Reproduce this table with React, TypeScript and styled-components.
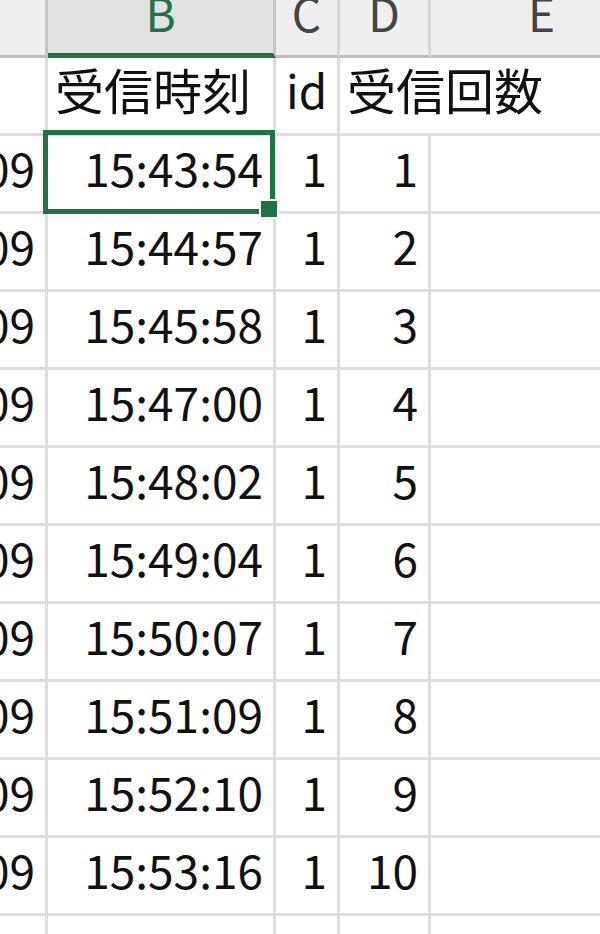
import React from "react";
import styled, { createGlobalStyle } from "styled-components";

const GlobalStyle = createGlobalStyle`
  html, body {
    margin: 0;
    padding: 0;
    background: #ffffff;
  }
  body {
    font-family: "Noto Sans CJK JP", "Noto Sans", sans-serif;
  }
`;

const GREEN = "#217346";

type Col = { key: string; width: number };

const columns: Col[] = [
  { key: "A", width: 48 },
  { key: "B", width: 228 },
  { key: "C", width: 64 },
  { key: "D", width: 91 },
  { key: "E", width: 224 },
];

const times = [
  "15:43:54",
  "15:44:57",
  "15:45:58",
  "15:47:00",
  "15:48:02",
  "15:49:04",
  "15:50:07",
  "15:51:09",
  "15:52:10",
  "15:53:16",
];

const App = () => {
  return (
    <>
      <GlobalStyle />
      <Sheet>
        <HeaderRow>
          {columns.map((c) => (
            <ColHeader
              key={c.key}
              $width={c.width}
              $selected={c.key === "B"}
              $dark={c.key === "A" || c.key === "B"}
            >
              {c.key === "A" ? "" : c.key}
            </ColHeader>
          ))}
        </HeaderRow>

        <Row>
          <Cell $width={48} />
          <Cell $width={228} $align="left" $cjk>受信時刻</Cell>
          <Cell $width={64} $align="left">id</Cell>
          <Cell $width={91} $align="left" $cjk $spill>受信回数</Cell>
          <Cell $width={224} />
        </Row>

        {times.map((t, i) => (
          <Row key={t}>
            <Cell $width={48}>2021/12/09</Cell>
            <Cell $width={228} $active={i === 0}>
              {t}
              {i === 0 && (
                <Selection>
                  <FillHandle />
                </Selection>
              )}
            </Cell>
            <Cell $width={64}>1</Cell>
            <Cell $width={91}>{i + 1}</Cell>
            <Cell $width={224} />
          </Row>
        ))}

        <Row>
          {columns.map((c) => (
            <Cell key={c.key} $width={c.width} />
          ))}
        </Row>
      </Sheet>
    </>
  );
};

export default App;

const Sheet = styled.div`
  width: 600px;
  height: 934px;
  overflow: hidden;
  background: #ffffff;
`;

const HeaderRow = styled.div`
  display: flex;
  height: 58px;
  background: #efefef;
`;

const ColHeader = styled.div<{ $width: number; $selected?: boolean; $dark?: boolean }>`
  flex: 0 0 ${(p) => p.$width}px;
  min-width: 0;
  box-sizing: border-box;
  height: 58px;
  display: flex;
  justify-content: center;
  align-items: flex-start;
  font-size: 46px;
  line-height: 24px;
  color: ${(p) => (p.$selected ? GREEN : "#444444")};
  background: ${(p) => (p.$selected ? "#e1e1e1" : "#efefef")};
  border-right: 3px solid ${(p) => (p.$dark ? "#c4c4c4" : "#d8d8d8")};
  border-bottom: ${(p) => (p.$selected ? `5px solid ${GREEN}` : "3px solid #bdbdbd")};
  overflow: hidden;
`;

const Row = styled.div`
  display: flex;
  height: 78px;
`;

const Cell = styled.div<{
  $width: number;
  $align?: "left" | "right";
  $cjk?: boolean;
  $spill?: boolean;
  $active?: boolean;
}>`
  position: relative;
  flex: 0 0 ${(p) => p.$width}px;
  min-width: 0;
  box-sizing: border-box;
  height: 78px;
  display: flex;
  justify-content: ${(p) => (p.$align === "left" ? "flex-start" : "flex-end")};
  align-items: flex-start;
  padding: 0 ${(p) => (p.$cjk ? "7px" : "10px")};
  border-right: ${(p) => (p.$spill ? "0" : "3px solid #dddddd")};
  border-bottom: 3px solid #dddddd;
  font-size: ${(p) => (p.$cjk ? "49px" : "46px")};
  line-height: 62px;
  color: #111111;
  white-space: nowrap;
  overflow: ${(p) => (p.$spill || p.$active ? "visible" : "hidden")};
  z-index: ${(p) => (p.$spill || p.$active ? 1 : 0)};
`;

const Selection = styled.span`
  position: absolute;
  left: -5px;
  top: -6px;
  right: -2px;
  bottom: -3px;
  border: 5px solid ${GREEN};
  pointer-events: none;
  z-index: 2;
`;

const FillHandle = styled.span`
  position: absolute;
  right: -9px;
  bottom: -10px;
  width: 16px;
  height: 16px;
  background: ${GREEN};
  border: 2px solid #ffffff;
`;
